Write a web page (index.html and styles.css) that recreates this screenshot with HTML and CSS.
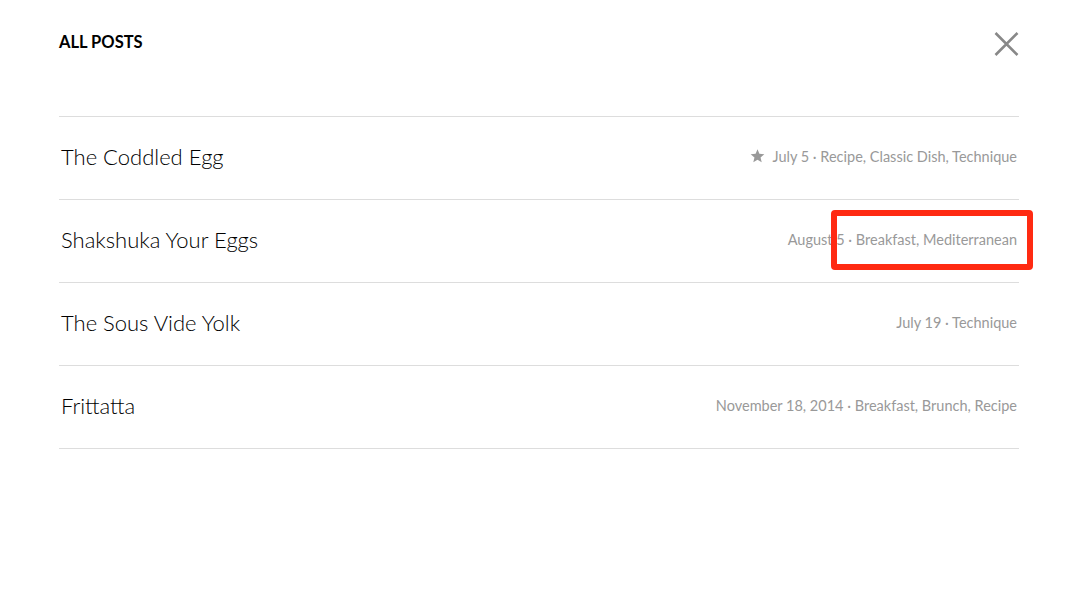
FILE: index.html
```html
<!DOCTYPE html>
<html lang="en">
<head>
    <meta charset="UTF-8">
    <title>All Posts</title>
    <link rel="stylesheet" href="styles.css">
</head>
<body>
    <div class="panel">
        <div class="panel-header">
            <h2 class="panel-title">ALL POSTS</h2>
            <button class="close-btn" aria-label="Close">
                <svg width="25" height="24" viewBox="0 0 25 24">
                    <path d="M1.5 1 L23.5 23 M23.5 1 L1.5 23" stroke="#888" stroke-width="2.6" fill="none"/>
                </svg>
            </button>
        </div>

        <ul class="post-list">
            <li class="post-row">
                <a class="post-title" href="#">The Coddled Egg</a>
                <span class="post-meta">
                    <svg class="star" width="15" height="14" viewBox="0 0 24 23">
                        <path d="M12 0.5 L15.1 8 L23.2 8.6 L17 13.9 L18.9 21.8 L12 17.5 L5.1 21.8 L7 13.9 L0.8 8.6 L8.9 8 Z" fill="#999"/>
                    </svg>
                    July 5 · Recipe, Classic Dish, Technique
                </span>
            </li>
            <li class="post-row">
                <a class="post-title" href="#">Shakshuka Your Eggs</a>
                <span class="post-meta">August 5 · Breakfast, Mediterranean</span>
            </li>
            <li class="post-row">
                <a class="post-title" href="#">The Sous Vide Yolk</a>
                <span class="post-meta">July 19 · Technique</span>
            </li>
            <li class="post-row">
                <a class="post-title" href="#">Frittatta</a>
                <span class="post-meta">November 18, 2014 · Breakfast, Brunch, Recipe</span>
            </li>
        </ul>
    </div>

    <div class="highlight-box"></div>
</body>
</html>
```

FILE: styles.css
```css
body {
    margin: 0;
    background: #fff;
    font-family: 'Lato', 'Open Sans', sans-serif;
    color: #111;
}

.panel {
    width: 960px;
    margin-left: 59px;
}

.panel-header {
    height: 88px;
    display: flex;
    align-items: center;
    justify-content: space-between;
}

.panel-title {
    margin: 0 0 4px;
    font-size: 16.5px;
    font-weight: 700;
    color: #000;
}

.close-btn {
    background: none;
    border: none;
    padding: 0;
    width: 25px;
    height: 24px;
    cursor: pointer;
    display: block;
}

.close-btn svg {
    display: block;
}

.post-list {
    list-style: none;
    margin: 28px 0 0;
    padding: 0;
    border-top: 1px solid #ddd;
}

.post-row {
    height: 78px;
    padding: 0 2px 4px 2px;
    border-bottom: 1px solid #ddd;
    display: flex;
    align-items: center;
    justify-content: space-between;
}

.post-title {
    font-size: 22px;
    font-weight: 300;
    color: #000;
    text-decoration: none;
}

.post-meta {
    font-size: 14.5px;
    color: #999;
    display: flex;
    align-items: center;
    gap: 7px;
}

.star {
    display: block;
}

.highlight-box {
    position: absolute;
    left: 831px;
    top: 210px;
    width: 202px;
    height: 60px;
    box-sizing: border-box;
    border: 6px solid #ff2a12;
    border-radius: 4px;
}
```
